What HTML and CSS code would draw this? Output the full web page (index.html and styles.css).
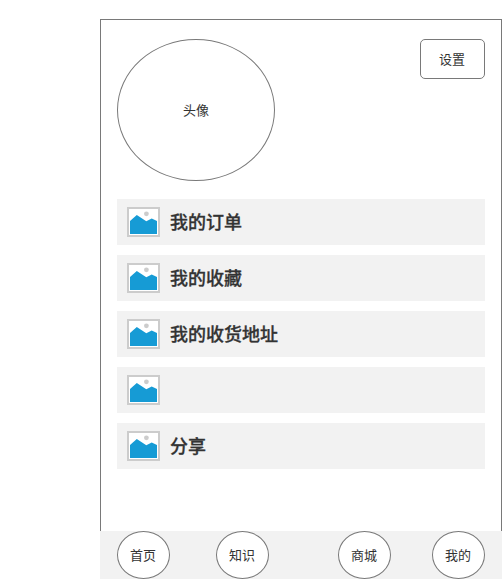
FILE: index.html
```
<!DOCTYPE html>
<html lang="zh-CN">
<head>
<meta charset="utf-8">
<title>我的</title>
<link rel="stylesheet" href="styles.css">
</head>
<body>
<svg class="defs" width="0" height="0" aria-hidden="true">
  <symbol id="picture" viewBox="0 0 33 30">
    <rect x="1" y="1" width="31" height="28" fill="#fff" stroke="#ccc" stroke-width="2"/>
    <circle cx="19.4" cy="6.8" r="2.4" fill="#ccc"/>
    <path d="M3 14 9.8 8 19.3 14.2 24.7 11.5 30 14V27H3Z" fill="#169bd5"/>
  </symbol>
</svg>
<div class="phone">
  <main class="screen">
    <header class="profile">
      <div class="avatar">头像</div>
      <button class="settings">设置</button>
    </header>
    <ul class="menu">
      <li class="item"><svg class="icon"><use href="#picture"/></svg><span>我的订单</span></li>
      <li class="item"><svg class="icon"><use href="#picture"/></svg><span>我的收藏</span></li>
      <li class="item"><svg class="icon"><use href="#picture"/></svg><span>我的收货地址</span></li>
      <li class="item"><svg class="icon"><use href="#picture"/></svg></li>
      <li class="item"><svg class="icon"><use href="#picture"/></svg><span>分享</span></li>
    </ul>
  </main>
  <nav class="tabs">
    <a class="tab">首页</a>
    <a class="tab">知识</a>
    <a class="tab tab-shop">商城</a>
    <a class="tab">我的</a>
  </nav>
</div>
</body>
</html>
```
FILE: styles.css
```
* { box-sizing: border-box; }

body {
  margin: 0;
  background: #fff;
  color: #333;
  font: 13px/20px "Noto Sans CJK SC", sans-serif;
  overflow: hidden;
}

.defs { display: block; }

.phone {
  display: flex;
  flex-direction: column;
  width: 402px;
  height: 560px;
  margin: 19px 0 0 100px;
}

.screen {
  flex: 1;
  padding: 19px 16px 0;
  border: 1px solid #797979;
  border-bottom: 0;
}

.profile {
  display: flex;
  justify-content: space-between;
  align-items: flex-start;
}

.avatar,
.settings,
.tab {
  display: flex;
  align-items: center;
  justify-content: center;
  border: 1px solid #797979;
  background: #fff;
}

.avatar {
  width: 158px;
  height: 142px;
  border-radius: 50%;
}

.settings {
  width: 65px;
  height: 40px;
  padding: 0 1px 1px 0;
  border-radius: 5px;
  color: inherit;
  font: inherit;
}

.menu {
  display: flex;
  flex-direction: column;
  gap: 10px;
  margin: 18px 0 0;
  padding: 0;
  list-style: none;
}

.item {
  display: flex;
  align-items: center;
  gap: 10px;
  height: 46px;
  padding: 0 10px;
  background: #f2f2f2;
  font-size: 18px;
  font-weight: 500;
  -webkit-text-stroke: 0.3px #333;
}

.item span { padding-bottom: 2px; }

.icon {
  width: 33px;
  height: 30px;
}

.tabs {
  display: flex;
  height: 48px;
  padding: 0 17px;
  justify-content: space-between;
  background: #f2f2f2;
}

.tab {
  width: 53px;
  height: 48px;
  padding-right: 1px;
  border-radius: 50%;
}

.tab-shop { margin: 0 -5px 0 23px; }
```
